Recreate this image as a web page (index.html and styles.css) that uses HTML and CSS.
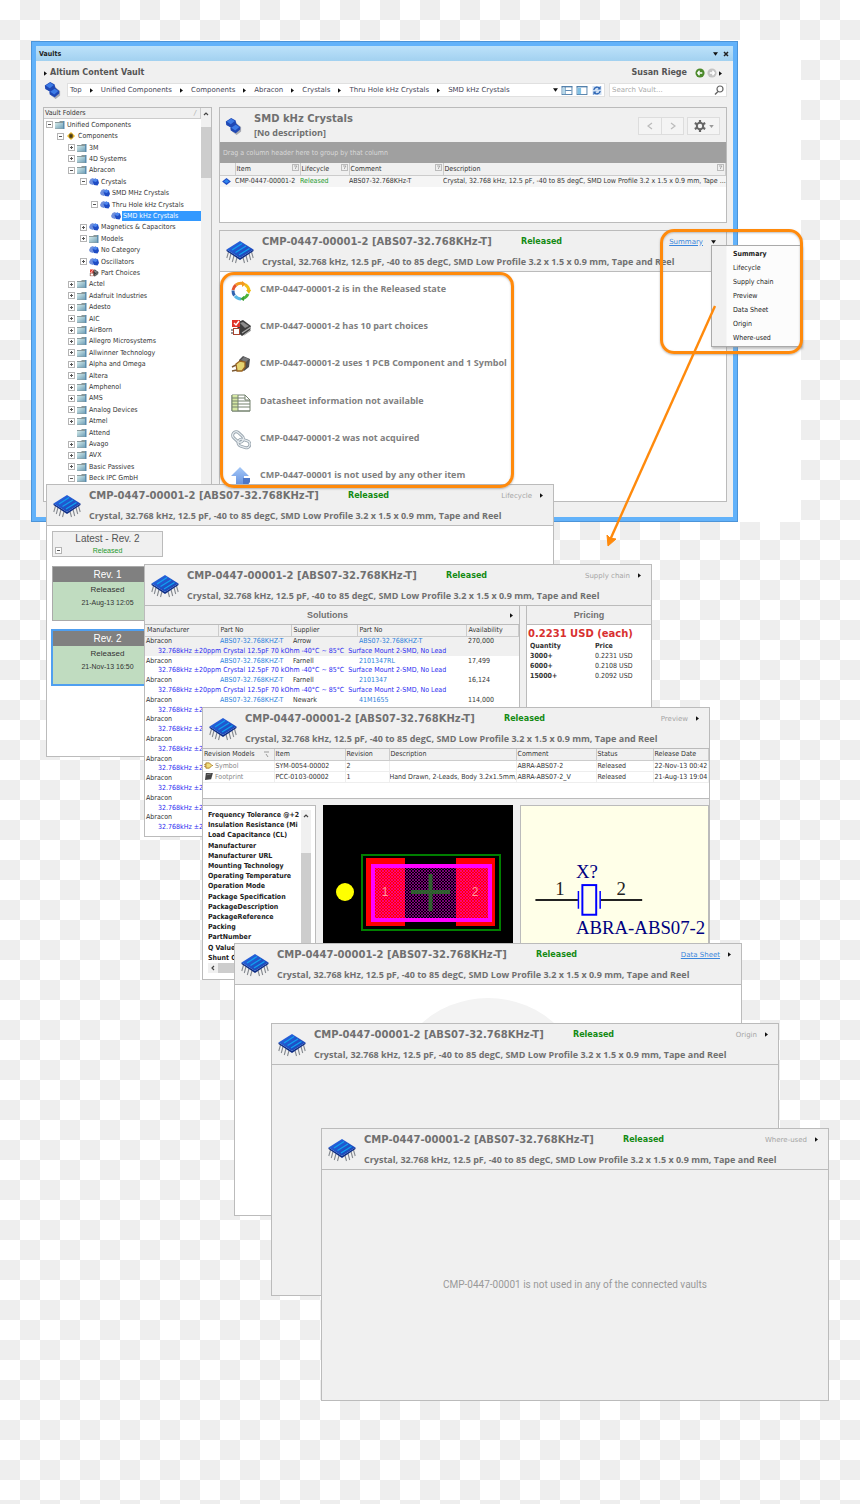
FILE: index.html
```html
<!DOCTYPE html>
<html lang="en">
<head>
<meta charset="utf-8">
<title>Vaults</title>
<link rel="stylesheet" href="styles.css">
</head>
<body>
<svg class="defs" aria-hidden="true">
  <defs>
    <linearGradient id="face" x1="0" y1="0" x2="1" y2="1"><stop offset="0" stop-color="#2a6ae6"/><stop offset="1" stop-color="#163fae"/></linearGradient>
    <linearGradient id="fold" x1="0" y1="0" x2="1" y2="1"><stop offset="0" stop-color="#d3eae9"/><stop offset="1" stop-color="#6f9fb8"/></linearGradient>
    <linearGradient id="up" x1="0" y1="0" x2="0" y2="1"><stop offset="0" stop-color="#a4c8f8"/><stop offset="1" stop-color="#6a95e0"/></linearGradient>
    <pattern id="mesh" width="3" height="3" patternUnits="userSpaceOnUse"><path d="M0 0L3 3M3 0L0 3" stroke="#f0f" stroke-width=".6" opacity=".75"/></pattern>
  </defs>
  <symbol id="chip" viewBox="0 0 28 24">
    <path d="M2.500 12L.8 18M5 13.500L3.300 20M8 15.500L6.300 22M11 17.500L9.500 23M17 17.500L18.500 23M20 15.500L21.700 22M23 13.500L24.700 20M25.500 12L27.200 18" stroke="#85898f" stroke-width="1.100" fill="none"/>
    <path d="M.5 9.500L14 18L27.500 9.500V11L14 20L.5 11Z" fill="#0c2c85"/>
    <path d="M.5 9.500L14 1L27.500 9.500L14 18Z" fill="url(#face)"/>
    <path d="M6 10L16 3.500M9.500 12.500L20 6M13 15L23.500 8.500" stroke="#10a0f0" stroke-width="1.300"/>
  </symbol>
  <symbol id="comps" viewBox="0 0 20 20">
    <path d="M3 9L9 12L9 16L14 20L19 16V11L15 8L13 5Z" fill="#777a88" opacity=".6"/>
    <path d="M2 5L8 1L13 4L13.500 8L8 12L2.500 9Z" fill="#1f48b4"/><path d="M3 5L8 2L12 4.500L7.500 8Z" fill="#3d7be6"/>
    <path d="M7 12L13 7L18 11V14L13 18L7.500 15Z" fill="#1f48b4"/><path d="M8 12L13 8.500L17 11L12.500 15Z" fill="#3d7be6"/>
  </symbol>
  <symbol id="pair" viewBox="0 0 10 8">
    <path d="M0 4L1.500 1L4 0L6 2L6 5L4 7L1 6Z" fill="#6f8fdc"/><path d="M3.500 3L6 0.500L9 1.500L10 5L8.500 7.500L5 7Z" fill="#1f4cc4"/><path d="M3.500 3L6 .5L9 1.500L7 4Z" fill="#4d86ee"/>
  </symbol>
  <symbol id="folder" viewBox="0 0 10 8">
    <path d="M0 1H4L5 0H9V8H0Z" fill="#8a9a9c"/><path d="M0 2H8V7.500H0Z" fill="url(#fold)"/><path d="M8 0H9.500V8H8Z" fill="#5b8eb0"/>
  </symbol>
  <symbol id="yellow" viewBox="0 0 10 10">
    <path d="M5 0L10 5L5 10L0 5Z" fill="#e8b62a"/><rect x="3" y="3" width="4" height="4" fill="#4a3d1c"/><path d="M4 2V8M6 2V8" stroke="#4a3d1c"/>
  </symbol>
  <symbol id="choices" viewBox="0 0 20 18">
    <path d="M7 3L12 1L20 7L19 12L11 17L6 13Z" fill="#3d3d3d"/><path d="M9 4L12 3L18 7L14 9Z" fill="#8c8c8c"/>
    <path d="M13 16L20 11M11 14L20 8" stroke="#aaa" stroke-width="1.200"/>
    <rect x="1" y="1" width="8" height="7" fill="#e0342a"/><path d="M3 4L5 6L8 2" stroke="#fff" stroke-width="1.400" fill="none"/>
    <rect x="2.500" y="9.500" width="6" height="6" fill="#fff" stroke="#a8452f"/>
    <path d="M0 11H2M0 14H2" stroke="#333"/>
  </symbol>
  <symbol id="usage" viewBox="0 0 20 18">
    <path d="M8 4L12 0L19 3L18 11L13 15L8 12Z" fill="#4e4e50"/><path d="M10 4L13 1L18 3L15 6Z" fill="#77787a"/>
    <path d="M5 8L9 5L14 6L14 11L11 15L6 15Z" fill="#e6d470" stroke="#9a6422" stroke-width="1.300"/>
    <path d="M1 11L5 9M1 15L6 14" stroke="#7c5a35" stroke-width="1.500"/>
  </symbol>
  <symbol id="cycle" viewBox="0 0 20 20">
    <g fill="none" stroke-width="3">
      <path d="M5 4A8 8 0 0 1 12 2.500" stroke="#f39a1f"/><path d="M14 3.500A8 8 0 0 1 18 10" stroke="#f2c015"/>
      <path d="M17 13A8 8 0 0 1 12 17.500" stroke="#4cb43a"/><path d="M10 18A8 8 0 0 1 4 15" stroke="#58b7e6"/>
      <path d="M3.500 14.500A8 8 0 0 1 2 9.500" stroke="#2f62b0"/><path d="M2 9A8 8 0 0 1 5 4" stroke="#e2532c"/>
    </g>
    <path d="M11 0L15 3L11 6Z" fill="#f39a1f"/><path d="M15 9H20L18 13Z" fill="#eab812"/><path d="M13 15V20L9 18Z" fill="#3aa036"/>
  </symbol>
  <symbol id="sheet" viewBox="0 0 20 18">
    <path d="M1 1H14L19 6V17H1Z" fill="#fff" stroke="#74826f"/><path d="M1 1H7V17H1Z" fill="#d6e8a4"/>
    <path d="M1 4H14M1 7H19M1 10H19M1 13H19M1 17H19M7 1V17M1 1V17M14 1V6H19" stroke="#74826f" fill="none"/>
  </symbol>
  <symbol id="links" viewBox="0 0 20 18">
    <g fill="none" stroke="#97a3ad" stroke-width="3"><rect x="1" y="2.500" width="12" height="7" rx="3.500" transform="rotate(42 7 6)"/><rect x="7" y="9" width="12" height="7" rx="3.500" transform="rotate(18 13 12.500)"/></g>
    <g fill="none" stroke="#e4eaee" stroke-width="1.200"><rect x="1" y="2.500" width="12" height="7" rx="3.500" transform="rotate(42 7 6)"/><rect x="7" y="9" width="12" height="7" rx="3.500" transform="rotate(18 13 12.500)"/></g>
  </symbol>
  <symbol id="where" viewBox="0 0 20 20">
    <path d="M9 0L18 9H13V17H5V9H0Z" fill="url(#up)"/><path d="M12 11H19V15L16 19L12 17Z" fill="#4d77c8"/>
  </symbol>
  <symbol id="right" viewBox="0 0 4 6"><path d="M0 0L4 3L0 6Z" fill="currentColor"/></symbol>
  <symbol id="down" viewBox="0 0 6 4"><path d="M0 0H6L3 4Z" fill="currentColor"/></symbol>
  <symbol id="filter" viewBox="0 0 7 7"><rect x=".5" y=".5" width="6" height="6" fill="#eee" stroke="#bbb"/><path d="M2 2H5L3.500 4V5" stroke="#999" stroke-width=".8" fill="none"/></symbol>
</svg>

<main class="desk">
  <div class="mat"></div>

  <section class="frame">
    <header class="bar"><h1>Vaults</h1><span class="tools"><button aria-label="Options"><svg class="dn"><use href="#down"/></svg></button><button aria-label="Close"><svg class="x" viewBox="0 0 6 6"><path d="M1 1L5 5M5 1L1 5" stroke="#222" stroke-width="1.500"/></svg></button></span></header>
    <div class="inner">
      <div class="account">
        <svg class="rt"><use href="#right"/></svg><strong>Altium Content Vault</strong>
        <span class="user"><strong>Susan Riege</strong>
          <button aria-label="Back"><svg class="nav" viewBox="0 0 11 11"><circle cx="5.500" cy="5.500" r="5" fill="#4c8a2c"/><path d="M5 3L3 5.500L5 8M3 5.500H8" stroke="#fff" stroke-width="1.500" fill="none"/></svg></button><button aria-label="Forward"><svg class="nav" viewBox="0 0 11 11"><circle cx="5.500" cy="5.500" r="5" fill="#c4c4c4"/><path d="M6 3L8 5.500L6 8M8 5.500H3" stroke="#fff" stroke-width="1.500" fill="none"/></svg></button>
          <svg class="rt"><use href="#right"/></svg></span>
      </div>
      <div class="address">
        <svg class="lead"><use href="#comps"/></svg>
        <nav class="crumbs"><a href="#">Top</a><svg class="rt"><use href="#right"/></svg><a href="#">Unified Components</a><svg class="rt"><use href="#right"/></svg><a href="#">Components</a><svg class="rt"><use href="#right"/></svg><a href="#">Abracon</a><svg class="rt"><use href="#right"/></svg><a href="#">Crystals</a><svg class="rt"><use href="#right"/></svg><a href="#">Thru Hole kHz Crystals</a><svg class="rt"><use href="#right"/></svg><a href="#">SMD kHz Crystals</a>
          <span class="views"><button aria-label="History"><svg class="dn"><use href="#down"/></svg></button><button aria-label="Split view"><svg class="view" viewBox="0 0 12 10"><rect x=".5" y=".5" width="11" height="9" fill="#fff" stroke="#4c7ca8"/><path d="M0 1H12M4 1V9M4 5H11" stroke="#4c7ca8"/><rect x="1" y="2" width="3" height="7" fill="#b5d8ea"/></svg></button><button aria-label="Side view"><svg class="view" viewBox="0 0 12 10"><rect x=".5" y=".5" width="11" height="9" fill="#fff" stroke="#4c7ca8"/><path d="M0 1H12" stroke="#4c7ca8"/><rect x="1" y="2" width="4" height="7" fill="#7fc0e4"/></svg></button><button aria-label="Refresh"><svg class="view" viewBox="0 0 12 10"><rect x="1" width="10" height="10" fill="#cfe0f4"/><path d="M2.500 4.500A3.500 3.500 0 0 1 9 3M9.500 5.500A3.500 3.500 0 0 1 3 7" stroke="#2f66b4" stroke-width="1.500" fill="none"/><path d="M10 0V4H6.500ZM2 10V6H5.500Z" fill="#2f66b4"/></svg></button></span>
        </nav>
        <label class="search"><input type="text" placeholder="Search Vault..." aria-label="Search Vault"><svg viewBox="0 0 10 10"><circle cx="6" cy="4" r="3" fill="none" stroke="#666" stroke-width="1.200"/><path d="M4 6.500L1 9.500" stroke="#666" stroke-width="1.400"/></svg></label>
      </div>

      <div class="columns">
        <aside class="tree">
          <div class="treemain">
            <div class="treehead">Vault Folders <i>/</i></div>
            <ul>
              <li class="l0"><b class="minus"></b><svg><use href="#folder"/></svg><span>Unified Components</span></li>
              <li class="l1"><b class="minus"></b><svg><use href="#yellow"/></svg><span>Components</span></li>
              <li class="l2"><b></b><svg><use href="#folder"/></svg><span>3M</span></li>
              <li class="l2"><b></b><svg><use href="#folder"/></svg><span>4D Systems</span></li>
              <li class="l2"><b class="minus"></b><svg><use href="#folder"/></svg><span>Abracon</span></li>
              <li class="l3"><b class="minus"></b><svg><use href="#pair"/></svg><span>Crystals</span></li>
              <li class="l4"><b class="none"></b><svg><use href="#pair"/></svg><span>SMD MHz Crystals</span></li>
              <li class="l4"><b class="minus"></b><svg><use href="#pair"/></svg><span>Thru Hole kHz Crystals</span></li>
              <li class="l5"><b class="none"></b><svg><use href="#pair"/></svg><span class="sel">SMD kHz Crystals</span></li>
              <li class="l3"><b></b><svg><use href="#pair"/></svg><span>Magnetics &amp; Capacitors</span></li>
              <li class="l3"><b></b><svg><use href="#folder"/></svg><span>Models</span></li>
              <li class="l3"><b class="none"></b><svg><use href="#pair"/></svg><span>No Category</span></li>
              <li class="l3"><b></b><svg><use href="#pair"/></svg><span>Oscillators</span></li>
              <li class="l3"><b class="none"></b><svg><use href="#choices"/></svg><span>Part Choices</span></li>
              <li class="l2"><b></b><svg><use href="#folder"/></svg><span>Actel</span></li>
              <li class="l2"><b></b><svg><use href="#folder"/></svg><span>Adafruit Industries</span></li>
              <li class="l2"><b></b><svg><use href="#folder"/></svg><span>Adesto</span></li>
              <li class="l2"><b></b><svg><use href="#folder"/></svg><span>AIC</span></li>
              <li class="l2"><b></b><svg><use href="#folder"/></svg><span>AirBorn</span></li>
              <li class="l2"><b></b><svg><use href="#folder"/></svg><span>Allegro Microsystems</span></li>
              <li class="l2"><b></b><svg><use href="#folder"/></svg><span>Allwinner Technology</span></li>
              <li class="l2"><b></b><svg><use href="#folder"/></svg><span>Alpha and Omega</span></li>
              <li class="l2"><b></b><svg><use href="#folder"/></svg><span>Altera</span></li>
              <li class="l2"><b></b><svg><use href="#folder"/></svg><span>Amphenol</span></li>
              <li class="l2"><b></b><svg><use href="#folder"/></svg><span>AMS</span></li>
              <li class="l2"><b></b><svg><use href="#folder"/></svg><span>Analog Devices</span></li>
              <li class="l2"><b></b><svg><use href="#folder"/></svg><span>Atmel</span></li>
              <li class="l2"><b class="none"></b><svg><use href="#folder"/></svg><span>Attend</span></li>
              <li class="l2"><b></b><svg><use href="#folder"/></svg><span>Avago</span></li>
              <li class="l2"><b></b><svg><use href="#folder"/></svg><span>AVX</span></li>
              <li class="l2"><b></b><svg><use href="#folder"/></svg><span>Basic Passives</span></li>
              <li class="l2"><b class="minus"></b><svg><use href="#folder"/></svg><span>Beck IPC GmbH</span></li>
            </ul>
          </div>
          <div class="scroll"><svg viewBox="0 0 6 4"><path d="M1 3L3 1L5 3" stroke="#444" stroke-width="1.200" fill="none"/></svg><i></i></div>
        </aside>

        <div class="right">
          <section class="listing">
            <header class="lhead">
              <svg class="lead"><use href="#comps"/></svg>
              <div><h2>SMD kHz Crystals</h2><p>[No description]</p></div>
              <span class="btns"><span class="pairbtn"><button aria-label="Previous"><svg viewBox="0 0 6 8"><path d="M5 1L1 4L5 7" stroke="#bbb" stroke-width="1.200" fill="none"/></svg></button><button aria-label="Next"><svg viewBox="0 0 6 8"><path d="M1 1L5 4L1 7" stroke="#bbb" stroke-width="1.200" fill="none"/></svg></button></span><button class="gear" aria-label="Settings"><svg viewBox="0 0 12 12"><circle cx="6" cy="6" r="3.200" fill="none" stroke="#666" stroke-width="2"/><path d="M6 0V2.500M6 9.500V12M.8 3L3 4.200M9 7.800L11.200 9M.8 9L3 7.800M9 4.200L11.200 3" stroke="#666" stroke-width="2.200"/></svg><svg class="dn"><use href="#down"/></svg></button></span>
            </header>
            <div class="group">Drag a column header here to group by that column</div>
            <table class="items">
              <colgroup><col class="c1"><col class="c2"><col class="c3"><col class="c4"><col></colgroup>
              <tr><th></th><th>Item<svg><use href="#filter"/></svg></th><th>Lifecycle<svg><use href="#filter"/></svg></th><th>Comment<svg><use href="#filter"/></svg></th><th>Description<svg><use href="#filter"/></svg></th></tr>
              <tr><td><svg class="mini" viewBox="0 0 10 8"><path d="M0 4L5 0L10 4L5 8Z" fill="#1f4cc4"/><path d="M2 4L5 1.500L8 4L5 6Z" fill="#2f86ee"/></svg></td><td>CMP-0447-00001-2</td><td class="ok">Released</td><td>ABS07-32.768KHz-T</td><td>Crystal, 32.768 kHz, 12.5 pF, -40 to 85 degC, SMD Low Profile 3.2 x 1.5 x 0.9 mm, Tape ...</td></tr>
            </table>
          </section>
          <section class="detail">
            <header class="chead"><svg class="chip"><use href="#chip"/></svg><div class="ct"><h3>CMP-0447-00001-2 [ABS07-32.768KHz-T]</h3><em>Released</em><a class="mode" href="#">Summary</a><svg class="dn"><use href="#down"/></svg></div><p>Crystal, 32.768 kHz, 12.5 pF, -40 to 85 degC, SMD Low Profile 3.2 x 1.5 x 0.9 mm, Tape and Reel</p></header>
            <ul class="facts">
              <li><svg><use href="#cycle"/></svg><span>CMP-0447-00001-2 is in the Released state</span></li>
              <li><svg><use href="#choices"/></svg><span>CMP-0447-00001-2 has 10 part choices</span></li>
              <li><svg><use href="#usage"/></svg><span>CMP-0447-00001-2 uses 1 PCB Component and 1 Symbol</span></li>
              <li><svg><use href="#sheet"/></svg><span>Datasheet information not available</span></li>
              <li><svg><use href="#links"/></svg><span>CMP-0447-00001-2 was not acquired</span></li>
              <li><svg><use href="#where"/></svg><span>CMP-0447-00001 is not used by any other item</span></li>
            </ul>
          </section>
        </div>
      </div>
    </div>
  </section>

  <section class="card lifecycle">
    <header class="chead"><svg class="chip"><use href="#chip"/></svg><div class="ct"><h3>CMP-0447-00001-2 [ABS07-32.768KHz-T]</h3><em>Released</em><span class="mode">Lifecycle</span><svg class="rt"><use href="#right"/></svg></div><p>Crystal, 32.768 kHz, 12.5 pF, -40 to 85 degC, SMD Low Profile 3.2 x 1.5 x 0.9 mm, Tape and Reel</p></header>
    <div class="revs">
      <div class="latest"><h4>Latest - Rev. 2</h4><p>Released</p><b class="minus"></b></div>
      <div class="rev"><h4>Rev. 1</h4><p class="state">Released</p><p>21-Aug-13 12:05</p></div>
      <div class="rev on"><h4>Rev. 2</h4><p class="state">Released</p><p>21-Nov-13 16:50</p></div>
    </div>
  </section>

  <section class="card supply">
    <header class="chead"><svg class="chip"><use href="#chip"/></svg><div class="ct"><h3>CMP-0447-00001-2 [ABS07-32.768KHz-T]</h3><em>Released</em><span class="mode">Supply chain</span><svg class="rt"><use href="#right"/></svg></div><p>Crystal, 32.768 kHz, 12.5 pF, -40 to 85 degC, SMD Low Profile 3.2 x 1.5 x 0.9 mm, Tape and Reel</p></header>
    <div class="split">
      <div class="solutions">
        <h4>Solutions<svg class="rt"><use href="#right"/></svg></h4>
        <table>
          <colgroup><col class="s1"><col class="s1"><col class="s2"><col class="s3"><col></colgroup>
          <tr><th>Manufacturer</th><th>Part No</th><th>Supplier</th><th>Part No</th><th>Availability</th></tr>
          <tr class="first"><td>Abracon</td><td class="pn">ABS07-32.768KHZ-T</td><td>Arrow</td><td class="pn">ABS07-32.768KHZ-T</td><td>270,000</td></tr>
          <tr class="first"><td colspan="5" class="desc">32.768kHz ±20ppm Crystal 12.5pF 70 kOhm -40°C ~ 85°C&nbsp; Surface Mount 2-SMD, No Lead</td></tr>
          <tr><td>Abracon</td><td class="pn">ABS07-32.768KHZ-T</td><td>Farnell</td><td class="pn">2101347RL</td><td>17,499</td></tr>
          <tr><td colspan="5" class="desc">32.768kHz ±20ppm Crystal 12.5pF 70 kOhm -40°C ~ 85°C&nbsp; Surface Mount 2-SMD, No Lead</td></tr>
          <tr><td>Abracon</td><td class="pn">ABS07-32.768KHZ-T</td><td>Farnell</td><td class="pn">2101347</td><td>16,124</td></tr>
          <tr><td colspan="5" class="desc">32.768kHz ±20ppm Crystal 12.5pF 70 kOhm -40°C ~ 85°C&nbsp; Surface Mount 2-SMD, No Lead</td></tr>
          <tr><td>Abracon</td><td class="pn">ABS07-32.768KHZ-T</td><td>Newark</td><td class="pn">41M1655</td><td>114,000</td></tr>
          <tr><td colspan="5" class="desc">32.768kHz ±2</td></tr>
          <tr><td>Abracon</td></tr><tr><td colspan="5" class="desc">32.768kHz ±2</td></tr>
          <tr><td>Abracon</td></tr><tr><td colspan="5" class="desc">32.768kHz ±2</td></tr>
          <tr><td>Abracon</td></tr><tr><td colspan="5" class="desc">32.768kHz ±2</td></tr>
          <tr><td>Abracon</td></tr><tr><td colspan="5" class="desc">32.768kHz ±2</td></tr>
          <tr><td>Abracon</td></tr><tr><td colspan="5" class="desc">32.768kHz ±2</td></tr>
          <tr><td>Abracon</td></tr><tr><td colspan="5" class="desc">32.768kHz ±2</td></tr>
        </table>
      </div>
      <div class="pricing">
        <h4>Pricing</h4>
        <strong class="each">0.2231 USD (each)</strong>
        <table>
          <colgroup><col class="p1"><col></colgroup>
          <tr><th>Quantity</th><th>Price</th></tr>
          <tr><th>3000+</th><td>0.2231 USD</td></tr>
          <tr><th>6000+</th><td>0.2108 USD</td></tr>
          <tr><th>15000+</th><td>0.2092 USD</td></tr>
        </table>
      </div>
    </div>
  </section>

  <section class="card preview">
    <header class="chead"><svg class="chip"><use href="#chip"/></svg><div class="ct"><h3>CMP-0447-00001-2 [ABS07-32.768KHz-T]</h3><em>Released</em><span class="mode">Preview</span><svg class="rt"><use href="#right"/></svg></div><p>Crystal, 32.768 kHz, 12.5 pF, -40 to 85 degC, SMD Low Profile 3.2 x 1.5 x 0.9 mm, Tape and Reel</p></header>
    <div class="modelbox">
      <table class="models">
        <colgroup><col class="m1"><col class="m1"><col class="m2"><col class="m3"><col class="m4"><col class="m5"><col></colgroup>
        <tr><th>Revision Models<svg viewBox="0 0 7 7"><path d="M1 1H6M3 3L5 6" stroke="#999" fill="none"/></svg></th><th>Item</th><th>Revision</th><th>Description</th><th>Comment</th><th>Status</th><th>Release Date</th></tr>
        <tr><td class="kind"><svg viewBox="0 0 10 8"><path d="M2 1H6L9 4L6 7H2Z" fill="#f0dc7c" stroke="#a8781e"/><path d="M0 3H2M0 5H2M9 4H10" stroke="#a8781e"/></svg> Symbol</td><td>SYM-0054-00002</td><td>2</td><td></td><td>ABRA-ABS07-2</td><td>Released</td><td>22-Nov-13 00:42</td></tr>
        <tr><td class="kind"><svg viewBox="0 0 10 8"><path d="M2 0H10L8 7L1 8Z" fill="#444"/><path d="M3 2L8 1" stroke="#888"/></svg> Footprint</td><td>PCC-0103-00002</td><td>1</td><td>Hand Drawn, 2-Leads, Body 3.2x1.5mm,</td><td>ABRA-ABS07-2_V</td><td>Released</td><td>21-Aug-13 19:04</td></tr>
      </table>
    </div>
    <div class="panes">
      <div class="params">
        <div class="prow">
          <ul><li>Frequency Tolerance @+2</li><li>Insulation Resistance (Mi</li><li>Load Capacitance (CL)</li><li>Manufacturer</li><li>Manufacturer URL</li><li>Mounting Technology</li><li>Operating Temperature</li><li>Operation Mode</li><li>Package Specification</li><li>PackageDescription</li><li>PackageReference</li><li>Packing</li><li>PartNumber</li><li>Q Value</li><li>Shunt C</li></ul>
          <div class="scroll"><svg viewBox="0 0 6 4"><path d="M1 3L3 1L5 3" stroke="#444" stroke-width="1.200" fill="none"/></svg><i></i></div>
        </div>
        <div class="hscroll"><svg viewBox="0 0 4 6"><path d="M3 1L1 3L3 5" stroke="#444" stroke-width="1.200" fill="none"/></svg><i></i></div>
      </div>
      <svg class="foot" viewBox="0 0 190 174">
        <rect width="190" height="174" fill="#000"/>
        <circle cx="22" cy="87" r="9" fill="#ff0"/>
        <rect x="39" y="50" width="138" height="75" fill="none" stroke="#007f00" stroke-width="2"/>
        <rect x="43" y="53" width="39" height="68" fill="#f00"/><rect x="133" y="53" width="39" height="68" fill="#f00"/>
        <rect x="50" y="61" width="117" height="54" fill="url(#mesh)" stroke="#f0f" stroke-width="4"/>
        <path d="M88 87H127M107.500 69V106" stroke="#2c702c" stroke-width="4" opacity=".85"/>
        <text x="62" y="91" class="pad">1</text><text x="152" y="91" class="pad">2</text>
      </svg>
      <svg class="schem" viewBox="0 0 188 174">
        <path d="M14 95H57M80 95H122" stroke="#222" stroke-width="2"/>
        <path d="M57.500 86V104M79.500 86V104" stroke="#00f" stroke-width="1.500"/>
        <rect x="61.500" y="80" width="14" height="30" fill="#ffffe8" stroke="#00f" stroke-width="2"/>
        <text x="34" y="90" class="pin">1</text><text x="96" y="90" class="pin">2</text>
        <text x="55" y="73" class="net">X?</text><text x="55" y="129" class="net">ABRA-ABS07-2</text>
      </svg>
    </div>
  </section>

  <section class="card sheet">
    <header class="chead"><svg class="chip"><use href="#chip"/></svg><div class="ct"><h3>CMP-0447-00001-2 [ABS07-32.768KHz-T]</h3><em>Released</em><a class="mode" href="#">Data Sheet</a><svg class="rt"><use href="#right"/></svg></div><p>Crystal, 32.768 kHz, 12.5 pF, -40 to 85 degC, SMD Low Profile 3.2 x 1.5 x 0.9 mm, Tape and Reel</p></header>
    <div class="disc"></div>
  </section>

  <section class="card plain origin">
    <header class="chead"><svg class="chip"><use href="#chip"/></svg><div class="ct"><h3>CMP-0447-00001-2 [ABS07-32.768KHz-T]</h3><em>Released</em><span class="mode">Origin</span><svg class="rt"><use href="#right"/></svg></div><p>Crystal, 32.768 kHz, 12.5 pF, -40 to 85 degC, SMD Low Profile 3.2 x 1.5 x 0.9 mm, Tape and Reel</p></header>
  </section>

  <section class="card plain used">
    <header class="chead"><svg class="chip"><use href="#chip"/></svg><div class="ct"><h3>CMP-0447-00001-2 [ABS07-32.768KHz-T]</h3><em>Released</em><span class="mode">Where-used</span><svg class="rt"><use href="#right"/></svg></div><p>Crystal, 32.768 kHz, 12.5 pF, -40 to 85 degC, SMD Low Profile 3.2 x 1.5 x 0.9 mm, Tape and Reel</p></header>
    <p class="empty">CMP-0447-00001 is not used in any of the connected vaults</p>
  </section>

  <div class="menu"><button class="cur">Summary</button><button>Lifecycle</button><button>Supply chain</button><button>Preview</button><button>Data Sheet</button><button>Origin</button><button>Where-used</button></div>
  <div class="mark m-facts"></div>
  <div class="mark m-menu"></div>
  <svg class="arrow" viewBox="0 0 120 250"><path d="M111 6L6 240" stroke="#ff8a0c" stroke-width="2.400" fill="none"/><path d="M4 246L3 235L6 238L12 239Z" fill="#ff8a0c" stroke="#ff8a0c"/></svg>
</main>
</body>
</html>
```
FILE: styles.css
```css
* { box-sizing: border-box; margin: 0; padding: 0; }
body {
  background: repeating-conic-gradient(#eee 0 25%, #fff 0 50%) 0 0 / 40px 40px;
  font: 7px/10px "DejaVu Sans Condensed", "DejaVu Sans", sans-serif;
  color: #333;
}
svg { display: block; flex: none; }
button, input { font: inherit; color: inherit; border: 0; background: none; }
a { color: inherit; text-decoration: none; }
ul { list-style: none; }
h1, h2, h3, h4 { font-size: inherit; }
table { border-collapse: collapse; table-layout: fixed; width: 100%; }
th, td { text-align: left; white-space: nowrap; overflow: hidden; }
.defs { position: absolute; width: 0; height: 0; }
.desk { position: relative; min-height: 1504px; overflow: hidden; }
.mat { position: absolute; left: 738px; top: 40px; width: 63px; height: 482px; background: #fff; }
.rt { width: 3px; height: 5px; color: #111; }
.dn { width: 5px; height: 4px; color: #111; }

/* main vault window */
.frame {
  position: absolute; left: 31px; top: 41px; width: 707px; height: 481px;
  display: flex; flex-direction: column; overflow: hidden;
  border: 5px solid #62b2fa; outline: 1px solid #4c94d8; outline-offset: -1px; background: #f0f0f0;
}
.bar {
  display: flex; align-items: center; justify-content: space-between; height: 15px; flex: none;
  padding: 0 4px 0 3px; background: linear-gradient(#bde2fa, #a2d1f0); color: #222;
}
.tools { display: flex; gap: 5px; }
.tools button { display: flex; align-items: center; }
.x { width: 6px; height: 6px; }
.inner { flex: 1; display: flex; flex-direction: column; min-height: 0; padding: 5px 6px 15px 7px; }
.account {
  display: flex; align-items: center; gap: 3px; height: 14px; margin-left: 1px;
  font-family: "DejaVu Sans"; font-size: 8px; color: #555;
}
.user { display: flex; align-items: center; gap: 2px; margin-left: auto; padding-right: 5px; }
.user strong { padding-right: 6px; }
.nav { width: 10px; height: 10px; }
.address { display: flex; align-items: center; height: 20px; margin-bottom: 2px; }
.lead { width: 18px; height: 18px; }
.crumbs, .search {
  display: flex; align-items: center; height: 14px; background: #fff; border: 1px solid #e0e0e0;
  font-family: "DejaVu Sans"; color: #445;
}
.crumbs { flex: 1; gap: 8px; margin-left: 6px; padding: 0 1px 0 2px; white-space: nowrap; }
.views { display: flex; gap: 3px; margin-left: auto; }
.views button { display: flex; align-items: center; }
.view { width: 12px; height: 9px; }
.search { width: 118px; margin-left: 4px; padding: 0 2px; }
.search input { flex: 1; min-width: 0; outline: 0; }
.search input::placeholder { color: #aaa; }
.search svg { width: 10px; height: 10px; }
.columns { flex: 1; display: flex; gap: 7px; min-height: 0; margin-top: 5px; }

.tree { display: flex; width: 169px; border: 1px solid #bbb; background: #fff; overflow: hidden; }
.treemain { flex: 1; min-width: 0; }
.treehead {
  display: flex; justify-content: space-between; height: 11px; padding: 0 4px 0 1px;
  background: #f0f0f0; border-bottom: 1px solid #ccc; border-right: 1px solid #ccc;
}
.treehead i { color: #aaa; }
.tree ul { display: flex; flex-direction: column; height: 365px; }
.tree li { flex: 1; display: flex; align-items: center; }
.tree li svg { width: 10px; height: 8px; margin-left: 2px; }
.tree li span { margin-left: 1px; padding: 0 1px; }
.tree .sel { flex: 1; background: #3399ff; color: #fff; }
.l0 { padding-left: 2px; }
.l1 { padding-left: 13px; }
.l2 { padding-left: 24px; }
.l3 { padding-left: 36px; }
.l4 { padding-left: 47px; }
.l5 { padding-left: 58px; }
.tree b, .latest b {
  flex: none; width: 7px; height: 7px; border: 1px solid #b4b4b4;
  background: linear-gradient(#555, #555) center / 3px 1px no-repeat, linear-gradient(#555, #555) center / 1px 3px no-repeat, #fff;
}
.tree b.minus, .latest b { background: linear-gradient(#555, #555) center / 3px 1px no-repeat, #fff; }
.tree b.none { visibility: hidden; }
.scroll { width: 10px; background: #f0f0f0; }
.scroll svg { width: 6px; height: 4px; margin: 4px 2px; }
.scroll i { display: block; background: #cdcdcd; }
.tree .scroll i { height: 51px; margin-top: 11px; }

.right { flex: 1; display: flex; flex-direction: column; gap: 7px; min-width: 0; }
.listing, .detail { border: 1px solid #bbb; background: #fff; }
.listing { height: 116px; }
.lhead { display: flex; align-items: center; height: 34px; padding: 2px 6px 0 4px; background: #f0f0f0; font-family: "DejaVu Sans"; color: #707070; }
.lhead div { margin-left: 12px; }
.lhead h2 { font-size: 10px; line-height: 14px; }
.lhead p { font: bold 9px/14px "Open Sans", sans-serif; }
.btns { display: flex; gap: 3px; margin-left: auto; }
.pairbtn, .gear { display: flex; align-items: center; justify-content: center; height: 18px; border: 1px solid #ddd; background: #f4f4f4; }
.pairbtn button { display: flex; justify-content: center; align-items: center; width: 22px; height: 16px; }
.pairbtn button + button { border-left: 1px solid #ddd; }
.pairbtn svg { width: 6px; height: 8px; }
.gear { width: 33px; gap: 3px; }
.gear svg { width: 12px; height: 12px; }
.gear .dn { width: 5px; height: 3px; color: #999; }
.group { height: 21px; padding: 0 3px; background: #a0a0a0; color: #d8d8d8; line-height: 23px; }
.items th, .solutions th, .models th { font-weight: normal; background: #f0f0f0; border: solid #ccc; border-width: 0 1px 1px 0; }
.items th { height: 12px; padding: 0 1px; }
.items th svg { float: right; width: 7px; height: 7px; }
.items td { height: 12px; padding: 0; background: #f5f5f5; }
.mini { width: 9px; height: 7px; margin-left: 2px; }
.c1 { width: 15px; }
.c2 { width: 65px; }
.c3 { width: 49px; }
.c4 { width: 94px; }
.items .ok { color: #1e9a2e; }
.detail { flex: 1; min-height: 0; overflow: hidden; }

/* component header shared by every card */
.chead {
  display: grid; grid-template-columns: 42px 1fr; grid-template-rows: 20px 20px; height: 41px;
  background: #f0f0f0; border-bottom: 1px solid #bbb; font-family: "DejaVu Sans"; color: #707070;
}
.chip { grid-row: 1 / 3; align-self: center; width: 28px; height: 24px; margin: 2px 0 0 6px; }
.ct { display: flex; align-items: center; padding: 1px 10px 0 0; }
.ct h3 { width: 259px; font-size: 10px; white-space: nowrap; }
.ct em { font-size: 8px; font-style: normal; font-weight: bold; color: #138a13; }
.mode { margin: 0 8px 0 auto; color: #a5a5a5; }
a.mode { color: #3a86dc; text-decoration: underline; }
.chead p { font: bold 9px/22px "Open Sans", sans-serif; white-space: nowrap; }
.facts { display: grid; grid-auto-rows: 1fr; height: 224px; font: bold 9px/10px "Open Sans", sans-serif; color: #808080; }
.facts li { display: flex; align-items: center; padding-left: 11px; gap: 9px; }
.facts svg { width: 20px; height: 20px; }
.facts span { padding-bottom: 4px; }

/* cascading cards */
.card { position: absolute; width: 508px; height: 273px; border: 1px solid #bbb; background: #fff; overflow: hidden; }
.plain { background: #f0f0f0; }
.lifecycle { left: 46px; top: 484px; }
.supply { left: 144px; top: 564px; }
.preview { left: 202px; top: 707px; background: #f0f0f0; }
.sheet { left: 234px; top: 943px; }
.origin { left: 271px; top: 1023px; }
.used { left: 321px; top: 1128px; }

.revs { display: grid; gap: 9px; width: 121px; padding: 5px; text-align: center; font-family: "Liberation Sans", sans-serif; }
.latest { display: grid; grid-template-columns: 10px 1fr 10px; height: 26px; border: 1px solid #bbb; background: #f0f0f0; align-items: center; }
.latest h4 { grid-column: 1 / 4; }
.latest p { grid-area: 2 / 2; color: #1e9a2e; }
.latest b { grid-area: 2 / 1; margin-left: 2px; }
.revs h4 { font: 10px/13px "Liberation Sans", sans-serif; color: #555; }
.rev { height: 55px; border: 1px solid #aaa; background: #c0dcc0; }
.revs .rev h4 { line-height: 15px; background: #808080; color: #fff; }
.rev p { line-height: 12px; }
.rev .state { font-size: 8px; line-height: 15px; }
.rev.on { border-color: #4f9ff0; outline: 1px solid #4f9ff0; }

.split { display: flex; gap: 6px; height: 231px; background: #f0f0f0; }
.split h4 { height: 19px; font: bold 9px/18px "Liberation Sans", sans-serif; text-align: center; color: #707070; background: #f0f0f0; border-bottom: 1px solid #bbb; }
.solutions { width: 375px; background: #fff; border-right: 1px solid #bbb; overflow: hidden; }
.solutions h4 { display: grid; grid-template-columns: 1fr auto; align-items: center; padding-right: 6px; }
.pricing { flex: 1; background: #fff; border-left: 1px solid #bbb; }
.s1 { width: 73px; }
.s2 { width: 66px; }
.s3 { width: 109px; }
.p1 { width: 65px; }
.solutions th { height: 11px; padding-left: 2px; }
.solutions td { height: 10px; line-height: 9px; padding-left: 2px; }
.solutions td:first-child { padding-left: 1px; }
.solutions tr:nth-child(5n) td { height: 9px; }
.first td { background: #f0f0f0; }
.pn { color: #2a7fdc; }
.solutions .desc:first-child { padding-left: 13px; color: #2a2af0; }
.each { display: block; padding: 4px 1px 2px; font: bold 10px/10px "DejaVu Sans"; color: #d83030; white-space: nowrap; }
.pricing table { margin-left: 3px; }
.pricing th, .pricing td { height: 10px; }

.modelbox { height: 50px; background: #fff; border-bottom: 1px solid #bbb; }
.models th, .models td { height: 11px; padding-left: 1px; }
.models td { border: solid #eee; border-width: 0 1px 1px 0; }
.models td:nth-child(4) { padding: 0; }
.models th svg { float: right; width: 7px; height: 7px; margin: 2px 4px 0 0; }
.models .kind { color: #888; }
.kind svg { display: inline-block; vertical-align: middle; width: 9px; height: 7px; }
.m1 { width: 71px; }
.m2 { width: 44px; }
.m3 { width: 127px; }
.m4 { width: 80px; }
.m5 { width: 57px; }
.panes { display: flex; gap: 7px; margin-top: 6px; }
.params { width: 113px; height: 175px; padding: 4px 4px 5px 5px; border: 1px solid #bbb; border-left: 0; background: #fff; }
.prow { display: flex; height: 153px; }
.prow ul { flex: 1; display: grid; min-width: 0; overflow: hidden; white-space: nowrap; font-weight: bold; color: #222; }
.prow .scroll i { height: 102px; margin-top: 35px; }
.hscroll { display: flex; align-items: center; height: 10px; background: #f0f0f0; }
.hscroll svg { width: 4px; height: 6px; margin: 0 3px; }
.hscroll i { width: 70px; height: 10px; background: #cdcdcd; }
.foot { width: 190px; height: 174px; }
.schem { flex: 1; height: 174px; background: #ffffe8; border: 1px solid #bbb; }
.pad { font: 12px "Liberation Sans"; fill: #ff9a9a; text-anchor: middle; }
.pin { font: 19px "Liberation Serif"; fill: #222; }
.net { font: 19px "Liberation Serif"; fill: #000080; }

.disc { width: 200px; height: 200px; margin: 13px 0 0 153px; border-radius: 50%; background: #f3f3f3; }
.empty { padding-top: 109px; text-align: center; font: 10px/12px Roboto, sans-serif; color: #999; }

/* annotations */
.menu {
  position: absolute; left: 711px; top: 245px; width: 91px; padding: 1px 0; display: grid;
  background: linear-gradient(90deg, #f0f0f0 14px, #fcfcfc 15px); border: 1px solid #aaa; box-shadow: 1px 2px 2px #8888;
}
.menu button { height: 14px; padding-left: 21px; text-align: left; color: #222; }
.menu .cur { font-weight: bold; }
.mark { position: absolute; border: 3px solid #ff8a0c; border-radius: 14px; box-shadow: 0 1px 2px #8889, inset 0 1px 2px #8888; }
.m-facts { left: 220px; top: 272px; width: 294px; height: 216px; }
.m-menu { left: 660px; top: 229px; width: 143px; height: 125px; }
.arrow { position: absolute; left: 604px; top: 300px; width: 120px; height: 250px; }
```
